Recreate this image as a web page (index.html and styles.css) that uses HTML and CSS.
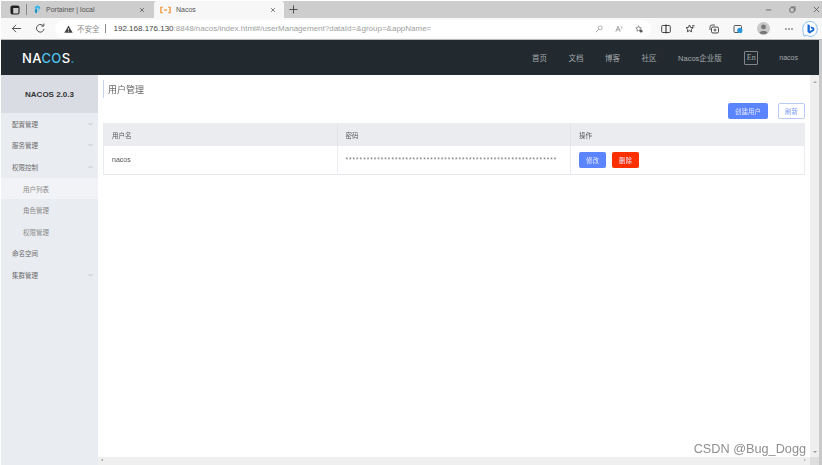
FILE: index.html
```html
<!DOCTYPE html>
<html lang="zh">
<head>
<meta charset="utf-8">
<title>Nacos</title>
<link rel="stylesheet" href="styles.css">
</head>
<body>
<div class="window">
  <div class="tabbar">
    <svg class="ic tabs-ic" viewBox="0 0 10 10"><rect x="1" y="1" width="8" height="8" rx="1.5" fill="none" stroke="#222" stroke-width="1.1"/><rect x="1" y="1" width="8" height="2" fill="#222"/><rect x="1" y="1" width="2.2" height="8" fill="#222"/></svg>
    <span class="tabsep"></span>
    <div class="tab">
      <svg class="ic fav" viewBox="0 0 8 10"><path d="M4 0 7 1.8V5L4 3.2 1 5V1.8Z" fill="#3db5e6"/><path d="M3.4 3.8V9.5L1 8V5.2Z" fill="#1d8fc4"/><path d="M4.2 4.2 6.5 5.6 4.2 8.5Z" fill="#69c8ee"/></svg>
      <span class="tabtitle">Portainer | local</span>
      <svg class="ic close" viewBox="0 0 8 8"><path d="M1.5 1.5 6.5 6.5M6.5 1.5 1.5 6.5" stroke="#444" stroke-width=".9"/></svg>
    </div>
    <div class="tab tab-active">
      <svg class="ic favn" viewBox="0 0 12 8"><path d="M3 1H1V7H3M9 1H11V7H9" fill="none" stroke="#f08a24" stroke-width="1.3"/><path d="M4.5 4H7.5" stroke="#f08a24" stroke-width="1.3"/></svg>
      <span class="tabtitle">Nacos</span>
      <svg class="ic close" viewBox="0 0 8 8"><path d="M1.5 1.5 6.5 6.5M6.5 1.5 1.5 6.5" stroke="#444" stroke-width=".9"/></svg>
    </div>
    <svg class="ic newtab" viewBox="0 0 10 10"><path d="M5 .5V9.5M.5 5H9.5" stroke="#333" stroke-width=".9"/></svg>
    <div class="winctl">
      <svg class="ic" viewBox="0 0 8 8"><path d="M1 4.5H7" stroke="#555" stroke-width=".9"/></svg>
      <svg class="ic" viewBox="0 0 8 8"><rect x="1" y="2" width="5" height="5" rx="1" fill="none" stroke="#555" stroke-width=".9"/><path d="M2.5 1H7V5.5" fill="none" stroke="#555" stroke-width=".8"/></svg>
      <svg class="ic" viewBox="0 0 8 8"><path d="M1 1 7 7M7 1 1 7" stroke="#555" stroke-width=".9"/></svg>
    </div>
  </div>
  <div class="toolbar">
    <svg class="ic nav back" viewBox="0 0 12 12"><path d="M11 6H1.5M5.5 2 1.5 6 5.5 10" fill="none" stroke="#444" stroke-width="1"/></svg>
    <svg class="ic nav reload" viewBox="0 0 12 12"><path d="M10 6.5A4.2 4.2 0 1 1 8.6 2.6" fill="none" stroke="#444" stroke-width="1"/><path d="M9.6 .6V3.4H6.8" fill="none" stroke="#444" stroke-width="1"/></svg>
    <div class="addr">
      <svg class="ic warn" viewBox="0 0 10 9"><path d="M5 .5 9.7 8.7H.3Z" fill="#444"/><path d="M5 3.4V6M5 6.7V7.6" stroke="#fff" stroke-width=".8"/></svg>
      <span class="insecure">不安全</span>
      <span class="addrsep"></span>
      <span class="url"><b>192.168.176.130</b>:8848/nacos/index.html#/userManagement?dataId=&amp;group=&amp;appName=</span>
      <div class="addr-icons">
        <svg class="ic" viewBox="0 0 10 10"><circle cx="6.5" cy="3.5" r="2.4" fill="none" stroke="#888" stroke-width=".8"/><path d="M4.8 5.2 1 9" stroke="#888" stroke-width=".9"/></svg>
        <svg class="ic" viewBox="0 0 10 10"><path d="M1 8.5 3.8 1.5 6.5 8.5M2 6H5.6" fill="none" stroke="#777" stroke-width=".8"/><path d="M7 1.5 9 3.2 7 4.8" fill="none" stroke="#777" stroke-width=".7"/></svg>
        <svg class="ic" viewBox="0 0 10 10"><path d="M4.5 1 5.6 3.4 8 3.7 6.2 5.4 6.5 7.8 4.5 6.6 2.4 7.8 2.8 5.4 1 3.7 3.4 3.4Z" fill="none" stroke="#555" stroke-width=".8"/><circle cx="7.6" cy="7.6" r="1.9" fill="#555"/></svg>
      </div>
    </div>
    <div class="tool-icons">
      <svg class="ic" viewBox="0 0 10 10"><rect x=".7" y="1.5" width="8.6" height="7" rx="1" fill="none" stroke="#333" stroke-width=".9"/><path d="M5 .5V9.5" stroke="#333" stroke-width="1.100"/></svg>
      <svg class="ic" viewBox="0 0 10 10"><path d="M4.5 1 5.6 3.4 8 3.7 6.2 5.4 6.5 7.8 4.500 6.6 2.4 7.8 2.8 5.4 1 3.7 3.4 3.4Z" fill="none" stroke="#333" stroke-width=".9"/><path d="M7 1.5H9.500M7 3H9.500" stroke="#333" stroke-width=".7"/></svg>
      <svg class="ic" viewBox="0 0 10 10"><rect x="2.5" y="3" width="7" height="6" rx="1.5" fill="none" stroke="#333" stroke-width=".9"/><path d="M1 6V3A2 2 0 0 1 3 1H6M4.500 6H7.500M6 4.500V7.500" fill="none" stroke="#333" stroke-width=".8"/></svg>
      <svg class="ic" viewBox="0 0 10 10"><rect x="1" y="1.5" width="7.5" height="7" rx="1" fill="none" stroke="#444" stroke-width=".9"/><circle cx="6.8" cy="6.4" r="2.6" fill="#2a95d8"/></svg>
      <svg class="ic avatar" viewBox="0 0 14 14"><circle cx="7" cy="7" r="7" fill="#c9c9c9"/><circle cx="7" cy="5.3" r="2.6" fill="#777"/><path d="M2.6 11.6C3.4 9 10.6 9 11.4 11.6A6.5 6.5 0 0 1 2.6 11.6Z" fill="#777"/></svg>
      <svg class="ic" viewBox="0 0 10 10"><circle cx="2" cy="5" r=".8" fill="#444"/><circle cx="5" cy="5" r=".8" fill="#444"/><circle cx="8" cy="5" r=".8" fill="#444"/></svg>
    </div>
    <div class="bingbox">
      <svg class="ic bing" viewBox="0 0 16 16"><path d="M8 .5C3.8.5.8 3.6.8 8c0 2.500.6 4.500 1.200 7.200L5 13.900C6 15 7 15.500 8 15.500c4.200 0 7.200-3.300 7.200-7.500S12.200.5 8 .5Z" fill="#fff" stroke="#7db4f0" stroke-width=".9"/><path d="M5.500 3.200 7.800 4v6l3-1.600-1.500-.8-1-2.300 4 1.500v2.800L7.800 12.500 5.500 11Z" fill="#1668d8"/></svg>
    </div>
  </div>
  <header class="topnav">
    <div class="logo">N<span class="logo-a">A</span><span class="logo-co">CO</span>S<span class="logo-dot">.</span></div>
    <nav class="menu">
      <span>首页</span><span>文档</span><span>博客</span><span>社区</span><span>Nacos企业版</span>
      <span class="lang">En</span>
      <span class="user">nacos</span>
    </nav>
  </header>
  <div class="body">
    <aside class="side">
      <div class="side-head">NACOS 2.0.3</div>
      <ul class="side-list">
        <li class="item">配置管理<svg class="chev" viewBox="0 0 6 4"><path d="M.7.8 3 3.200 5.300.8" fill="none" stroke="#aaa" stroke-width=".7"/></svg></li>
        <li class="item">服务管理<svg class="chev" viewBox="0 0 6 4"><path d="M.7.8 3 3.200 5.300.8" fill="none" stroke="#aaa" stroke-width=".7"/></svg></li>
        <li class="item">权限控制<svg class="chev" viewBox="0 0 6 4"><path d="M.7 3.200 3 .8 5.300 3.200" fill="none" stroke="#aaa" stroke-width=".7"/></svg></li>
        <li class="item sub current">用户列表</li>
        <li class="item sub">角色管理</li>
        <li class="item sub">权限管理</li>
        <li class="item">命名空间</li>
        <li class="item">集群管理<svg class="chev" viewBox="0 0 6 4"><path d="M.7.8 3 3.200 5.300.8" fill="none" stroke="#aaa" stroke-width=".7"/></svg></li>
      </ul>
    </aside>
    <div class="main-col">
      <div class="main-row">
        <main class="content">
          <h1 class="title">用户管理</h1>
          <div class="actions">
            <button class="btn btn-primary btn-create">创建用户</button>
            <button class="btn btn-ghost">刷新</button>
          </div>
          <table class="tbl">
            <thead>
              <tr><th class="c1">用户名</th><th class="c2">密码</th><th>操作</th></tr>
            </thead>
            <tbody>
              <tr>
                <td>nacos</td>
                <td class="pw">************************************************************</td>
                <td><button class="btn btn-primary">修改</button><button class="btn btn-danger">删除</button></td>
              </tr>
            </tbody>
          </table>
          <div class="watermark">CSDN @Bug_Dogg</div>
        </main>
        <div class="vscroll"><span class="arrow-up"></span><span class="arrow-down"></span></div>
      </div>
      <div class="hscroll"><span class="arrow-left"></span><span class="arrow-right"></span><span class="corner"></span></div>
    </div>
  </div>
</div>
</body>
</html>
```
FILE: styles.css
```css
* { box-sizing: border-box; }
html, body { margin: 0; padding: 0; background: #fff; }
body { width: 822px; height: 465px; overflow: hidden; font-family: "Liberation Sans", "Noto Sans CJK SC", sans-serif; }
.window { display: flex; flex-direction: column; height: 465px; padding: 1px 0 0 1px; filter: blur(.4px); }
.ic { display: block; flex: none; }

.tabbar { display: flex; align-items: center; height: 17px; background: #cdcdcd; padding-left: 9px; flex: none; }
.tabs-ic { width: 10px; height: 10px; }
.tabsep { width: 1px; height: 11px; background: #888; margin: 0 5px 0 6px; }
.tab { display: flex; align-items: center; width: 121px; height: 17px; padding: 0 8px 0 2px; }
.tab-active { background: #f7f7f7; width: 130px; margin-left: 1px; padding-left: 6px; border-radius: 3px 3px 0 0; }
.fav { width: 7px; height: 9px; margin-right: 5px; }
.favn { width: 11px; height: 8px; margin-right: 5px; }
.tabtitle { flex: 1; font-size: 7px; color: #555; }
.close { width: 6px; height: 6px; }
.newtab { width: 9px; height: 9px; margin-left: 5px; }
.winctl { margin-left: auto; display: flex; gap: 17px; padding-right: 2px; }
.winctl .ic { width: 7px; height: 7px; }

.toolbar { display: flex; align-items: center; height: 22px; background: #f8f8f8; flex: none; border-bottom: 1px solid #bbb; padding-left: 10px; }
.nav { width: 11px; height: 11px; }
.reload { margin-left: 13px; margin-right: 9px; }
.addr { width: 596px; height: 18px; background: #fff; border-radius: 9px; display: flex; align-items: center; padding: 0 8px 0 9px; }
.warn { width: 9px; height: 8px; margin-right: 4px; }
.insecure { font-size: 7.500px; color: #888; }
.addrsep { width: 1px; height: 9px; background: #888; margin: 0 8px 0 5px; }
.url { font-size: 8px; color: #a0a0a0; white-space: nowrap; }
.url b { font-weight: 400; color: #444; }
.addr-icons { margin-left: auto; display: flex; gap: 12px; }
.addr-icons .ic { width: 8px; height: 8px; }
.tool-icons { display: flex; align-items: center; gap: 14px; margin-left: 10px; }
.tool-icons .ic { width: 10px; height: 10px; }
.tool-icons .avatar { width: 13px; height: 13px; }
.bingbox { margin-left: 8px; }
.bing { width: 16px; height: 16px; }

.topnav { display: flex; align-items: center; justify-content: space-between; height: 35px; width: 821px; background: #222a2f; border-right: 3px solid #c9c9c9; padding: 0 21px 0 21px; flex: none; }
.logo { font-family: "Inter", "Liberation Sans", sans-serif; font-size: 13px; font-weight: 500; color: #fff; letter-spacing: .4px; }
.logo-co { color: #4fc3ee; }
.logo-dot { color: #2e9fd0; }
.menu { display: flex; align-items: center; font-size: 7.500px; color: #a4a8ab; }
.menu span { margin-left: 21.500px; }
.menu .lang { width: 14px; height: 14px; border: 1px solid #80858a; border-radius: 1px; display: flex; align-items: center; justify-content: center; margin-left: 22.500px; font-family: "Liberation Serif", serif; font-size: 8px; }
.menu .user { margin-left: 21px; font-size: 7px; }

.body { display: flex; flex: 1; min-height: 0; border-right: 3px solid #c9c9c9; }
.side { width: 97px; background: #e9ecf1; flex: none; }
.side-head { height: 38px; background: #d9dde3; display: flex; align-items: center; justify-content: center; font-size: 8px; font-weight: 700; color: #333; }
.side-list { list-style: none; margin: 0; padding: 0; }
.item { height: 21.600px; display: flex; align-items: center; justify-content: space-between; padding: 0 5.500px 0 11px; font-size: 6.500px; color: #6a6a6a; }
.sub { padding-left: 22px; color: #8a8a8a; }
.current { background: #f2f3f6; }
.chev { width: 5px; height: 4px; }

.main-col { flex: 1; display: flex; flex-direction: column; min-width: 0; }
.main-row { flex: 1; display: flex; min-height: 0; }
.content { flex: 1; padding: 5px 5px 0 5px; position: relative; min-width: 0; }
.title { margin: 0; height: 18px; line-height: 20px; border-left: 1.500px solid #c5d6ec; padding-left: 4px; font-size: 9px; font-weight: 400; color: #666; }
.actions { display: flex; justify-content: flex-end; gap: 10px; margin-top: 5px; }
.btn { height: 16px; width: 27px; padding: 0; border-radius: 2px; border: 1px solid transparent; font-family: inherit; font-size: 6.500px; color: #e4eaff; }
.btn-create { width: 40px; }
.btn-primary { background: #5b84ff; }
.btn-ghost { background: #fff; border-color: #b9c9f8; color: #7c98f0; }
.btn-danger { background: #ff3000; margin-left: 6px; }
.tbl { width: 702px; margin-top: 4px; border-collapse: collapse; table-layout: fixed; font-size: 7px; border-bottom: 1px solid #e6e7eb; border-left: 1px solid #ebecef; border-right: 1px solid #ebecef; }
.tbl th { height: 23px; background: #ebecf0; font-weight: 400; color: #555; text-align: left; padding: 0 8px; border-right: 1px solid #e2e3e7; font-size: 6.500px; }
.tbl th:last-child { border-right: 0; }
.tbl td { height: 28px; padding: 0 8px; color: #555; border-right: 1px solid #ebecef; }
.tbl td:last-child { border-right: 0; }
.c1, .c2 { width: 233.500px; }
.tbl .pw { font-size: 6.500px; letter-spacing: 1px; white-space: nowrap; color: #777; overflow: hidden; }
.watermark { position: absolute; right: 4px; bottom: 0; font-family: "Liberation Sans", sans-serif; font-size: 12.700px; color: #8f8f8f; line-height: 15px; }

.vscroll { width: 9px; background: #efefef; flex: none; position: relative; }
.arrow-up, .arrow-down { position: absolute; left: 2.500px; width: 0; height: 0; border-left: 2px solid transparent; border-right: 2px solid transparent; }
.arrow-up { top: 6px; border-bottom: 2.500px solid #aaa; }
.arrow-down { bottom: 4px; border-top: 2px solid #999; }
.hscroll { height: 8px; background: #efefef; flex: none; position: relative; }
.arrow-left, .arrow-right { position: absolute; top: 2px; width: 0; height: 0; border-top: 1.500px solid transparent; border-bottom: 1.500px solid transparent; }
.arrow-left { left: 3px; border-right: 2px solid #888; }
.arrow-right { right: 13px; border-left: 2px solid #aaa; }
.corner { position: absolute; right: 0; top: 0; width: 9px; height: 8px; background: #dedede; }
```
